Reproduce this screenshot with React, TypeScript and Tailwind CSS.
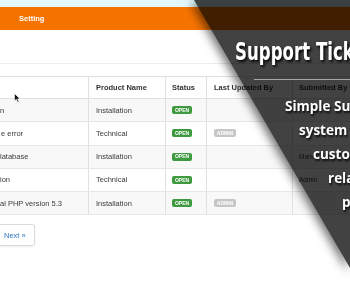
const cols = 'grid grid-cols-[88px_77px_41px_86px_90px]';

const rows = [
  { subject: 'n', product: 'Installation', admin: false, by: '' },
  { subject: 'e error', product: 'Technical', admin: true, by: '' },
  { subject: 'latabase', product: 'Installation', admin: false, by: 'Mark' },
  { subject: 'ion', product: 'Technical', admin: false, by: 'Admin' },
  { subject: 'al PHP version 5.3', product: 'Installation', admin: true, by: '' },
];

const lines = [
  { text: 'Simple Support Ticket', ml: 'ml-[285px]' },
  { text: 'system for your', ml: 'ml-[299px]' },
  { text: 'customers', ml: 'ml-[313px]' },
  { text: 'related to', ml: 'ml-[328px]' },
  { text: 'products', ml: 'ml-[342px]' },
];

export default function App() {
  return (
    <div className="relative w-[350px] h-[288px] overflow-hidden bg-white font-['Liberation_Sans',Arial,sans-serif] text-[7.5px] text-[#3a3a3a]">
      {/* top strip + orange nav */}
      <div className="h-[7px] bg-[#e2f8fb]" />
      <div className="h-[23px] bg-[#f67300] flex items-center pl-[19px]">
        <span className="font-bold text-white">Setting</span>
      </div>
      <div className="h-[34px] border-b border-[#ececec]" />

      {/* tickets table */}
      <div className="mt-[12px] border-t border-[#e0e0e0]">
        <div className={`${cols} h-[22px] border-b border-[#e0e0e0] font-bold text-[#333]`}>
          <div />
          <div className="border-l border-[#e0e0e0] pl-[7px] flex items-center">Product Name</div>
          <div className="border-l border-[#e0e0e0] pl-[6px] flex items-center">Status</div>
          <div className="border-l border-[#e0e0e0] pl-[7px] flex items-center">Last Updated By</div>
          <div className="border-l border-[#e0e0e0] pl-[6px] flex items-center">Submitted By</div>
        </div>
        {rows.map((r, i) => (
          <div
            key={i}
            className={`${cols} h-[23.3px] border-b border-[#e6e6e6] ${i % 2 === 0 ? 'bg-[#f8f8f8]' : 'bg-white'}`}
          >
            <div className={`flex items-center whitespace-nowrap ${i === 1 ? 'pl-[1px]' : ''}`}>{r.subject}</div>
            <div className="border-l border-[#e0e0e0] pl-[7px] flex items-center">{r.product}</div>
            <div className="border-l border-[#e0e0e0] pl-[6px] flex items-center">
              <span className="bg-[#3f9a3f] text-white font-bold text-[5px] leading-none rounded-[2px] w-[20px] h-[8px] flex items-center justify-center">
                OPEN
              </span>
            </div>
            <div className="border-l border-[#e0e0e0] pl-[7px] flex items-center">
              {r.admin && (
                <span className="bg-[#c6c6c6] text-white font-bold text-[5px] leading-none rounded-[2px] w-[22px] h-[8px] flex items-center justify-center">
                  ADMIN
                </span>
              )}
            </div>
            <div className="border-l border-[#e0e0e0] pl-[6px] flex items-center text-[6.5px]">{r.by}</div>
          </div>
        ))}
      </div>

      {/* pagination */}
      <div className="mt-[9px] flex">
        <div className="h-[22px] w-[35px] border border-l-0 border-[#dcdcdc] rounded-r-[3px] shadow-[0_1px_2px_rgba(0,0,0,0.08)] flex items-center pl-[4px] text-[#2f74c0]">
          Next »
        </div>
      </div>

      {/* mouse cursor */}
      <svg className="absolute left-[14px] top-[93px]" width="7" height="10" viewBox="0 0 7 10">
        <path d="M0.5 0.5 L0.5 8 L2.3 6.3 L3.6 9.2 L4.8 8.7 L3.6 5.9 L6 5.9 Z" fill="#111" stroke="#fff" strokeWidth="0.6" />
      </svg>

      {/* dark diagonal banner */}
      <div className="absolute inset-0 mix-blend-multiply [filter:drop-shadow(-3px_3px_5px_rgba(0,0,0,0.55))]">
        <div className="w-full h-full bg-[#424242] [clip-path:polygon(194px_0,350px_0,350px_268px)]" />
      </div>

      {/* banner text */}
      <div className="absolute top-[40px] left-[235px] whitespace-nowrap origin-left scale-x-[0.77] font-['DejaVu_Sans_Condensed','DejaVu_Sans',sans-serif] [font-stretch:condensed] font-bold text-[24px] leading-[24px] text-white [text-shadow:2px_2px_3px_rgba(0,0,0,0.9)]">
        Support Ticket System
      </div>
      <div className="absolute top-[79px] left-[254px] w-[96px] h-px bg-[#a8a8a8]" />
      <div className="absolute top-[94px] left-0 right-0 flex flex-col font-['Open_Sans',sans-serif] font-bold text-[13.5px] leading-[24px] text-white [text-shadow:1px_2px_2px_rgba(0,0,0,0.85)]">
        {lines.map((l) => (
          <div key={l.text} className={`${l.ml} whitespace-nowrap`}>
            {l.text}
          </div>
        ))}
      </div>
    </div>
  );
}
